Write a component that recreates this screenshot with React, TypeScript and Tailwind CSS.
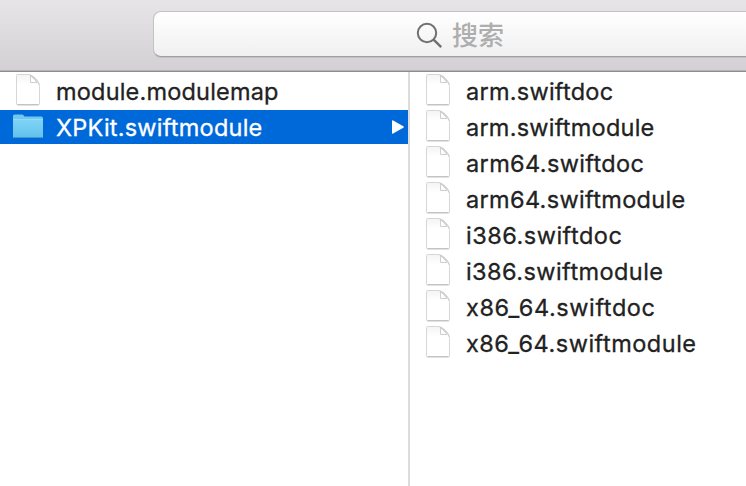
import React from "react";

type Entry = { name: string; tracking: string };

const modules: Entry[] = [
  { name: "arm.swiftdoc", tracking: "tracking-[0.25px]" },
  { name: "arm.swiftmodule", tracking: "tracking-[0.23px]" },
  { name: "arm64.swiftdoc", tracking: "tracking-[0.36px]" },
  { name: "arm64.swiftmodule", tracking: "tracking-[0.33px]" },
  { name: "i386.swiftdoc", tracking: "tracking-[0.5px]" },
  { name: "i386.swiftmodule", tracking: "tracking-[0.43px]" },
  { name: "x86_64.swiftdoc", tracking: "tracking-[0.58px]" },
  { name: "x86_64.swiftmodule", tracking: "tracking-[0.5px]" },
];

function FileIcon() {
  return (
    <svg className="block h-[34px] w-7 shrink-0" viewBox="0 0 28 34" fill="none">
      <defs>
        <linearGradient id="paper" x1="0" y1="0" x2="0" y2="1">
          <stop offset="0" stopColor="#f4f4f4" />
          <stop offset="0.35" stopColor="#ffffff" />
        </linearGradient>
      </defs>
      <path d="M3.5 .5H14.5C19 .8 25.5 7 25.5 12.5V29.8a1 1 0 0 1-1 1H3.5a1 1 0 0 1-1-1V1.5a1 1 0 0 1 1-1Z" fill="url(#paper)" stroke="#d6d6d6" />
      <path d="M3.5 30.8H24.5" stroke="#b8b8b8" />
      <path d="M16.5 1.8V8.5H23C21.3 5.8 19 3.6 16.5 1.8Z" fill="#fff" stroke="#cfcfcf" />
      <path d="M15.5 .9C19 2.4 23.8 6.5 25.3 10.8" stroke="#cbcbcb" />
    </svg>
  );
}

function FolderIcon() {
  return (
    <svg className="block h-[34px] w-[30px] shrink-0" viewBox="0 0 30 34" fill="none">
      <defs>
        <linearGradient id="folder" x1="0" y1="0" x2="0" y2="1">
          <stop offset="0" stopColor="#7fd4f7" />
          <stop offset="1" stopColor="#62c0ec" />
        </linearGradient>
      </defs>
      <path d="M0 6Q0 4.5 1.5 4.5H9Q10 4.5 10.7 5.5L11.5 6.5H28.5Q30 6.5 30 8V27H0Z" fill="#70c8ee" />
      <path d="M0 9.5H30V26.5Q30 28 28.5 28H1.5Q0 28 0 26.5Z" fill="url(#folder)" />
      <path d="M0 9.5H30" stroke="#93dcf9" />
      <path d="M.5 27.5H29.5" stroke="#429bcf" />
    </svg>
  );
}

export default function App() {
  return (
    <div className="flex h-[486px] w-[746px] flex-col overflow-hidden bg-white font-['Inter',sans-serif] text-[23.5px] leading-[34px] text-[#222]">
      <header className="h-[72px] shrink-0 border-b border-[#8f8d8f] bg-linear-to-b from-[#e7e5e8] to-[#d2d0d3] pt-[11px] pl-[153px] shadow-[inset_0_-1px_0_#b5b3b5]">
        <div className="flex h-[46px] w-[620px] items-center rounded-lg border border-[#c4c2c4] border-b-[#a19fa1] bg-linear-to-b from-white to-[#f0f0f0] pl-[262px] shadow-[0_1px_0_#c3c1c4]">
          <svg className="mt-[3px] size-7 shrink-0" viewBox="0 0 28 28" fill="none" stroke="#707070" strokeWidth="2">
            <circle cx="11" cy="11" r="9.2" />
            <path d="m17.6 17.6 7.6 7.6" strokeWidth="2.4" />
          </svg>
          <span className="ml-[8px] font-['Noto_Sans_CJK_SC',sans-serif] text-[26px] font-medium text-[#aeaeae]">搜索</span>
        </div>
      </header>
      <main className="flex flex-1 [-webkit-text-stroke:0.3px]">
        <section className="flex w-[410px] flex-col gap-[2px] border-r-2 border-[#dcdcdc] pt-[2px]">
          <div className="flex h-[34px] items-center pl-[14px]">
            <FileIcon />
            <span className="ml-[14px] pt-[2px] tracking-[0.19px] whitespace-nowrap">module.modulemap</span>
          </div>
          <div className="flex h-[34px] items-center bg-[#0069d9] pl-[13px] text-white">
            <FolderIcon />
            <span className="ml-[13px] pt-[2px] tracking-[0.23px] whitespace-nowrap">XPKit.swiftmodule</span>
            <svg className="mr-[4px] ml-auto h-[14px] w-3" viewBox="0 0 12 14" fill="#fff">
              <path d="M0 1Q0-.2 1.2.4L11.3 6.2Q12.4 7 11.3 7.8L1.2 13.6Q0 14.2 0 13Z" />
            </svg>
          </div>
        </section>
        <section className="flex flex-1 flex-col gap-[2px] pt-[2px] pl-[14px]">
          {modules.map((m) => (
            <div key={m.name} className="flex h-[34px] items-center">
              <FileIcon />
              <span className={`ml-[14px] pt-[2px] whitespace-nowrap ${m.tracking}`}>{m.name}</span>
            </div>
          ))}
        </section>
      </main>
    </div>
  );
}
